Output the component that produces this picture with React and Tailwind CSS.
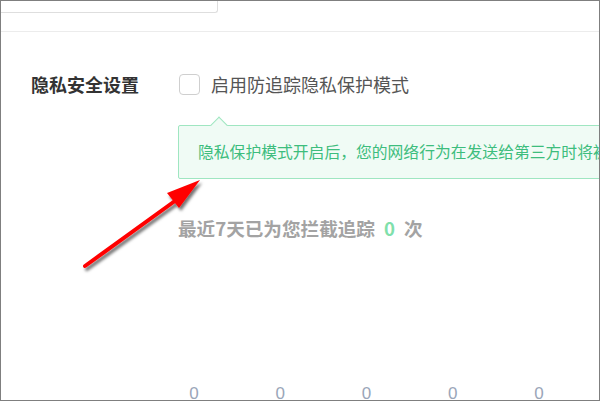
import React from "react";

export default function App() {
  const font = { fontFamily: '"Noto Sans CJK SC", "Noto Sans", sans-serif' };
  return (
    <div
      className="relative w-[600px] h-[401px] border border-[#7f7f7f] bg-white overflow-hidden"
      style={font}
    >
      {/* top input */}
      <div className="w-[217px] h-[12px] border-r border-b border-[#dedede] rounded-br-[3px]" />
      {/* divider */}
      <div className="mt-[18px] border-t border-[#ececec]" />

      <div className="flex pl-[30px] pt-[41px]">
        <div className="w-[147px] shrink-0 text-[18px] leading-[22px] font-bold text-[#333]">
          隐私安全设置
        </div>
        <div className="flex flex-col shrink-0">
          <div className="flex items-center">
            <div className="ml-[1px] w-[21px] h-[21px] rounded-[4px] border border-[#cfcfcf] bg-white" />
            <span className="ml-[11px] text-[18px] leading-[22px] text-[#555]">
              启用防追踪隐私保护模式
            </span>
          </div>

          <div className="relative mt-[30px] w-[460px] h-[54px] border border-[#9fe6c1] bg-[#f0fbf5] rounded-[2px] flex items-center pl-[19px] whitespace-nowrap">
            <div className="absolute left-[34px] top-[-7px] w-[12px] h-[12px] rotate-45 border-l border-t border-[#9fe6c1] bg-[#f0fbf5]" />
            <span className="text-[15.8px] text-[#3dbd7d]">
              隐私保护模式开启后，您的网络行为在发送给第三方时将被加密处理
            </span>
          </div>

          <div className="mt-[37px] text-[18.6px] leading-[24px] font-bold text-[#a3a3a3] whitespace-nowrap">
            最近7天已为您拦截追踪<span className="text-[#80e0ab] mx-[9px]">0</span>次
          </div>
        </div>
      </div>

      {/* chart axis labels */}
      <div className="grid grid-cols-5 w-[431px] ml-[150px] mt-[144px] text-[17px] leading-[20px] text-[#9aa6b9]" style={{ fontFamily: '"Liberation Sans", sans-serif' }}>
        <span className="text-center">0</span>
        <span className="text-center">0</span>
        <span className="text-center">0</span>
        <span className="text-center">0</span>
        <span className="text-center">0</span>
      </div>

      {/* red annotation arrow */}
      <svg className="absolute left-0 top-0 pointer-events-none" width="600" height="401">
        <defs>
          <filter id="sh" x="-20%" y="-20%" width="140%" height="140%">
            <feDropShadow dx="2" dy="3" stdDeviation="1.6" floodColor="#000" floodOpacity="0.55" />
          </filter>
        </defs>
        <g filter="url(#sh)">
          <line x1="84" y1="265" x2="178" y2="197" stroke="#ff0000" strokeWidth="4" strokeLinecap="round" />
          <polygon points="199,179 166,192 178,207" fill="#ff0000" />
        </g>
      </svg>
    </div>
  );
}
